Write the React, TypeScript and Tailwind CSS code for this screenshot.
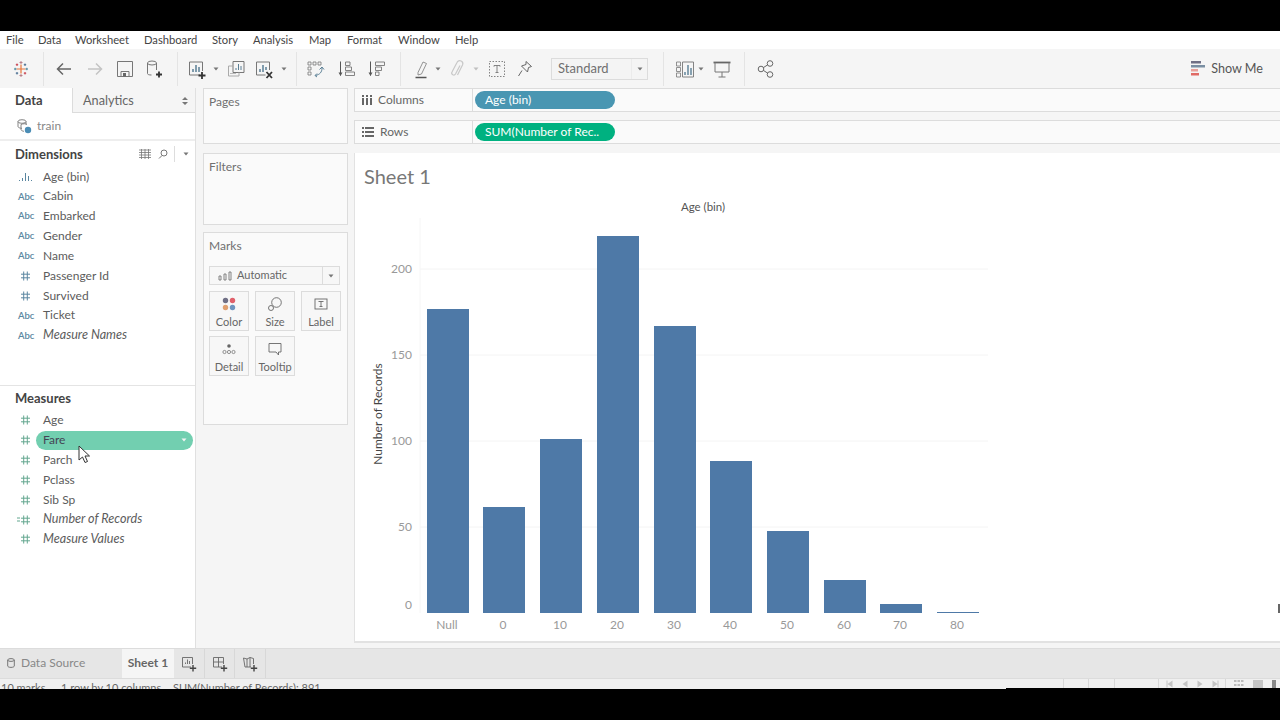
import React from "react";

const menus = [
  { label: "File", w: "w-[32px]" },
  { label: "Data", w: "w-[37px]" },
  { label: "Worksheet", w: "w-[69px]" },
  { label: "Dashboard", w: "w-[68px]" },
  { label: "Story", w: "w-[41px]" },
  { label: "Analysis", w: "w-[56px]" },
  { label: "Map", w: "w-[38px]" },
  { label: "Format", w: "w-[51px]" },
  { label: "Window", w: "w-[57px]" },
  { label: "Help", w: "w-[40px]" },
];

const dimensions = [
  { name: "Age (bin)", type: "bin" },
  { name: "Cabin", type: "abc" },
  { name: "Embarked", type: "abc" },
  { name: "Gender", type: "abc" },
  { name: "Name", type: "abc" },
  { name: "Passenger Id", type: "dimnum" },
  { name: "Survived", type: "dimnum" },
  { name: "Ticket", type: "abc" },
  { name: "Measure Names", type: "abc", italic: true },
];

const measures = [
  { name: "Age", type: "num" },
  { name: "Fare", type: "num", active: true },
  { name: "Parch", type: "num" },
  { name: "Pclass", type: "num" },
  { name: "Sib Sp", type: "num" },
  { name: "Number of Records", type: "calc", italic: true },
  { name: "Measure Values", type: "num", italic: true },
];

const bars = [
  { label: "Null", x: 427, top: 309 },
  { label: "0", x: 483, top: 507 },
  { label: "10", x: 540, top: 439 },
  { label: "20", x: 597, top: 236 },
  { label: "30", x: 654, top: 326 },
  { label: "40", x: 710, top: 461 },
  { label: "50", x: 767, top: 531 },
  { label: "60", x: 824, top: 580 },
  { label: "70", x: 880, top: 604 },
  { label: "80", x: 937, top: 612 },
];

const ticks = [
  { label: "200", y: 269 },
  { label: "150", y: 355 },
  { label: "100", y: 441 },
  { label: "50", y: 527 },
  { label: "0", y: 605 },
];

function Icon({ children, className = "" }: { children: React.ReactNode; className?: string }) {
  return (
    <svg viewBox="0 0 20 20" fill="none" stroke="#777" strokeWidth="1" className={`w-5 h-5 shrink-0 ${className}`}>
      {children}
    </svg>
  );
}

function Sep({ className = "" }: { className?: string }) {
  return <div className={`w-px h-[34px] bg-[#e4e4e4] shrink-0 ${className}`} />;
}

function Caret({ className = "", color = "#777" }: { className?: string; color?: string }) {
  return (
    <svg viewBox="0 0 6 4" className={`w-[6px] h-1 shrink-0 ${className}`}>
      <path d="M0.500 0.500h5L3 3.500z" fill={color} />
    </svg>
  );
}

function LogoIcon() {
  return (
    <svg viewBox="0 0 20 20" className="w-5 h-5 shrink-0 ml-[11px]" strokeWidth="1" fill="none">
      <path d="M10 5.500v9M5.500 10h9" stroke="#e8763a" strokeWidth="1.200" />
      <path d="M10 2v3M8.500 3.500h3M10 15v3M8.500 16.500h3" stroke="#b9808a" />
      <path d="M3 10h2.500M4.200 8.800v2.400M14.500 10H17M15.800 8.800v2.400" stroke="#4f8ba3" />
      <path d="M6 4.500v2.500M4.800 5.700h2.400M14 13v2.500M12.800 14.200h2.400" stroke="#c9404f" />
      <path d="M14 4.500v2.500M12.800 5.700h2.400M6 13v2.500M4.800 14.200h2.400" stroke="#4b6f92" />
    </svg>
  );
}

function FieldIcon({ type }: { type: string }) {
  if (type === "abc") {
    return <span className="w-[36px] pl-[18px] text-[9.500px] leading-none font-semibold text-[#5a86a0]">Abc</span>;
  }
  if (type === "bin") {
    return (
      <span className="w-[36px] pl-[18px] flex">
        <svg viewBox="0 0 15 10" className="w-[15px] h-[10px]">
          <path d="M1 8h1v1H1zM4 6h1v3H4zM7 1h1v8H7zM10 4h1v5h-1zM13 8h1v1h-1z" fill="#5a86a0" />
        </svg>
      </span>
    );
  }
  const color = type === "dimnum" ? "#5a86a0" : "#63a68f";
  return (
    <span className="w-[36px] pl-[15px] flex items-center">
      {type === "calc" ? (
        <svg viewBox="0 0 5 6" className="w-[5px] h-[6px]">
          <path d="M2 1h3M2 4h3" stroke={color} />
        </svg>
      ) : (
        <span className="w-[5px]" />
      )}
      <svg viewBox="0 0 10 10" className="w-[9px] h-[10px] ml-[1px]">
        <path d="M3 0v10M7 0v10M0 3h10M0 7h10" stroke={color} strokeWidth="1.100" />
      </svg>
    </span>
  );
}

function FieldRow({ f }: { f: { name: string; type: string; italic?: boolean; active?: boolean } }) {
  return (
    <div className="h-[19.850px] flex items-center">
      <FieldIcon type={f.type} />
      {f.active ? (
        <div className="w-[157px] h-[19px] rounded-full bg-[#72cfb0] flex items-center justify-between pl-[7px] pr-[5px] text-[#445]">
          <span>{f.name}</span>
          <Caret color="#f4f4f4" className="w-[8px]" />
        </div>
      ) : (
        <span className={f.italic ? "ml-[7px] italic text-[12.600px]" : "ml-[7px]"}>{f.name}</span>
      )}
    </div>
  );
}

function Card({ title, className = "", children }: { title: string; className?: string; children?: React.ReactNode }) {
  return (
    <div className={`bg-[#fafafa] border border-[#dcdcdc] px-[5px] shrink-0 ${className}`}>
      <div className="h-[26px] flex items-center text-[#707070]">{title}</div>
      {children}
    </div>
  );
}

function MarkButton({ label, children }: { label: string; children: React.ReactNode }) {
  return (
    <div className="w-10 h-10 border border-[#dcdcdc] bg-[#f7f7f7] flex flex-col items-center text-[11px] leading-[13px] text-[#666]">
      <div className="h-[22px] mt-px flex items-center justify-center">{children}</div>
      <span>{label}</span>
    </div>
  );
}

function ShelfRow({ icon, label, pill, pillColor }: { icon: React.ReactNode; label: string; pill: string; pillColor: string }) {
  return (
    <div className="h-[24px] bg-[#fafafa] border-y border-l border-[#dcdcdc] flex items-center shrink-0">
      <div className="w-[118px] h-full border-r border-[#dcdcdc] flex items-center pl-[7px] gap-[6px] text-[#666] shrink-0">
        {icon}
        <span>{label}</span>
      </div>
      <div className={`ml-[2px] w-[140px] h-[18px] rounded-full pl-[10px] flex items-center text-white ${pillColor}`}>{pill}</div>
    </div>
  );
}

function Chart() {
  return (
    <svg viewBox="355 195 925 445" className="w-[925px] h-[445px] shrink-0" fontFamily="Lato, sans-serif">
      <text x="703" y="211" fontSize="11.500" textAnchor="middle" fill="#555">Age (bin)</text>
      {ticks.slice(0, 4).map((t) => (
        <line key={t.label} x1="420" x2="988" y1={t.y} y2={t.y} stroke="#f4f4f4" />
      ))}
      <line x1="420" x2="420" y1="218" y2="613" stroke="#f6f6f6" />
      {ticks.map((t) => (
        <text key={t.label} x="412" y={t.y + 4} fontSize="12" textAnchor="end" fill="#999">{t.label}</text>
      ))}
      <text transform="translate(382 414) rotate(-90)" fontSize="12" textAnchor="middle" fill="#444">Number of Records</text>
      {bars.map((b) => (
        <g key={b.label}>
          <rect x={b.x} y={b.top} width="42" height={613 - b.top} fill="#4e79a7" />
          <text x={b.x + 20} y="629" fontSize="12" textAnchor="middle" fill="#999">{b.label}</text>
        </g>
      ))}
      <rect x="1278" y="604" width="2" height="9" fill="#666" />
    </svg>
  );
}

export default function App() {
  return (
    <div className="w-[1280px] h-[720px] overflow-hidden bg-black flex flex-col text-[12px] text-[#5c5c5c] relative font-['Lato',sans-serif]">
      <div className="h-[31px] shrink-0" />

      <div className="h-[18px] bg-white flex items-center pl-[6px] text-[11.200px] text-[#444] shrink-0">
        {menus.map((m) => (
          <span key={m.label} className={m.w}>{m.label}</span>
        ))}
      </div>

      <div className="h-[39px] bg-[#f5f5f5] flex items-center shrink-0">
        <LogoIcon />
        <Sep className="ml-[12px]" />
        <Icon className="ml-[10px]"><path d="M17 10H3.500M9 4.500L3.500 10 9 15.500" strokeWidth="1.500" stroke="#666" /></Icon>
        <Icon className="ml-[11px]"><path d="M3 10h13.500M11 4.500l5.500 5.500-5.500 5.500" stroke="#c4c4c4" strokeWidth="1.500" /></Icon>
        <Icon className="ml-[10px]"><path d="M2.500 2.500h15v15h-15zM6 17.500v-5h8v5" /><path d="M8 14h3v3.500H8z" fill="#666" stroke="none" /></Icon>
        <Icon className="ml-[9px]"><ellipse cx="8" cy="4" rx="4.500" ry="2" /><path d="M3.500 4v10.500c0 1 1.500 1.500 4 1.500M12.500 4v7" /><path d="M15 12.500v6M12 15.500h6" stroke="#333" strokeWidth="1.800" /></Icon>
        <Sep className="ml-[13px]" />
        <Icon className="ml-[9px]"><path d="M13 16H2.500V3h13v9" /><path d="M6 13v-3M9 13V6M12 13V8" strokeWidth="1.500" stroke="#5a7f95" /><path d="M15 13v7M11.500 16.500h7" stroke="#333" strokeWidth="1.800" /></Icon>
        <Caret className="ml-[6px]" />
        <Icon className="ml-[7px]"><path d="M7 2.500h11v11H7z" /><path d="M7 7H2.500v10H13v-3.500" stroke="#aaa" /><path d="M10 11V9M12.500 11V5M15 11V7" strokeWidth="1" stroke="#5a7f95" /><path d="M4 14.500h6" stroke="#bbb" /></Icon>
        <Icon className="ml-[8px]"><path d="M11.500 16H2.500V3h13v8" /><path d="M6 13v-3M9 13V6M12 11V8" strokeWidth="1.500" stroke="#5a7f95" /><path d="M12.500 13l5.500 6M18 13l-5.500 6" stroke="#333" strokeWidth="1.800" /></Icon>
        <Caret className="ml-[7px]" />
        <Sep className="ml-[9px]" />
        <Icon className="ml-[8px]"><path d="M3 3h3v3H3zM8 3h3v3H8zM13 3h3v3h-3zM3 8h3v3H3zM3 13h3v3H3z" strokeWidth="0.800" /><path d="M17 9c0 4-2 6.500-6.500 7.500M12 14.500l-2 2 2 1.500M14.500 10.500L17 8l2 2.500" stroke="#5a7f95" /></Icon>
        <Icon className="ml-[12px]"><path d="M3.500 2.500v14" stroke="#555" /><path d="M1.500 13.500l2 3.500 2-3.500z" fill="#555" stroke="none" /><path d="M8.500 3h4.500v3.500H8.500zM8.500 8h6v3.500h-6zM8.500 13h9v3.500h-9z" strokeWidth="0.900" /></Icon>
        <Icon className="ml-[10px]"><path d="M3.500 2.500v14" stroke="#555" /><path d="M1.500 13.500l2 3.500 2-3.500z" fill="#555" stroke="none" /><path d="M8.500 3h9v3.500h-9zM8.500 8h6v3.500h-6zM8.500 13h3.500v3.500H8.500z" strokeWidth="0.900" /></Icon>
        <Sep className="ml-[13px]" />
        <Icon className="ml-[11px]"><path d="M6 13.500L11 3l3.500 1.500-5 10.500-3.500 1z" strokeWidth="0.900" stroke="#888" /><path d="M3.500 18.500h11" stroke="#555" strokeWidth="1.500" /></Icon>
        <Caret className="ml-[3px]" />
        <Icon className="ml-[6px]"><path d="M13 6.500l-4.500 8.500a2 2 0 0 1-3.500-2l5-9.500a3 3 0 0 1 5.500 2.500l-5 10" stroke="#c8c8c8" strokeWidth="1.200" /></Icon>
        <Caret className="ml-[6px]" color="#c0c0c0" />
        <Icon className="ml-[8px]"><rect x="2.500" y="2.500" width="15" height="15" strokeDasharray="1.500 1.500" strokeWidth="0.900" /><path d="M7 6.500h6M10 6.500v7M8.500 13.500h3M7 6.500v1.200M13 6.500v1.200" strokeWidth="0.900" /></Icon>
        <Icon className="ml-[8px]"><path d="M11 2.500l5.500 5-3 1-1 4.500-6-6 4.500-1.500zM7 11.500L3.500 17" strokeWidth="1" stroke="#666" /></Icon>
        <div className="ml-[16px] w-[97px] h-[22px] bg-[#f4f4f4] border border-[#dcdcdc] flex items-center shrink-0 text-[13px] text-[#707070]">
          <span className="flex-1 pl-[6px]">Standard</span>
          <div className="w-[16px] h-full border-l border-[#ebebeb] flex items-center justify-center">
            <Caret />
          </div>
        </div>
        <Sep className="ml-[15px]" />
        <Icon className="ml-[11px]"><path d="M1.500 3h4v4h-4zM1.500 8.500h4v4h-4zM1.500 14h4v4h-4z" strokeWidth="0.800" /><path d="M7.500 3h11v15h-11z" strokeWidth="0.900" /><path d="M10 16v-3M13 16V6M16 16V9" stroke="#5a7f95" strokeWidth="1.400" /></Icon>
        <Caret className="ml-[3px]" />
        <Icon className="ml-[8px]"><path d="M1.500 3.500h17" strokeWidth="1.800" stroke="#666" /><path d="M3 3.500V13h14V3.500M10 13v5M6.500 18h7" strokeWidth="1" /></Icon>
        <Sep className="ml-[12px]" />
        <Icon className="ml-[11px]"><circle cx="5" cy="10" r="2.800" stroke="#666" /><circle cx="14" cy="4.500" r="2.800" stroke="#666" /><circle cx="14" cy="15.500" r="2.800" stroke="#666" /><path d="M7.400 8.600l4.200-2.700M7.400 11.400l4.200 2.700" stroke="#666" /></Icon>
        <div className="ml-auto flex items-center shrink-0 mr-[17px] mt-[1px]">
          <svg viewBox="0 0 14 16" className="w-[14px] h-4">
            <path d="M0 0h10v2.500H0z" fill="#6f6f85" />
            <path d="M0 4h14v2.500H0z" fill="#7a8fa3" />
            <path d="M0 8h7v2.500H0z" fill="#e8a09a" />
            <path d="M0 12h8v2.500H0z" fill="#e06a65" />
          </svg>
          <span className="ml-[6px] text-[12.600px] text-[#555]">Show Me</span>
        </div>
      </div>

      <div className="h-[560px] bg-[#f5f5f5] flex shrink-0">
        <div className="w-[196px] bg-white border-r border-[#e0e0e0] flex flex-col shrink-0">
          <div className="h-[25px] flex shrink-0">
            <div className="w-[72px] flex items-center pl-[15px] font-bold text-[13px] text-[#444]">Data</div>
            <div className="flex-1 bg-[#f5f5f5] border-l border-b border-[#dcdcdc] flex items-center pt-[1px] pl-[10px] pr-[7px] justify-between text-[12.700px] text-[#666]">
              <span>Analytics</span>
              <svg viewBox="0 0 6 8" className="w-[6px] h-2"><path d="M0 3L3 0l3 3zM0 5h6L3 8z" fill="#777" /></svg>
            </div>
          </div>
          <div className="h-[28px] border-b-2 border-[#eee] flex items-center pl-[16px] gap-[5px] shrink-0 text-[#888]">
            <svg viewBox="0 0 16 16" className="w-[16px] h-[16px]" fill="none" stroke="#777" strokeWidth="0.900">
              <ellipse cx="6" cy="3.500" rx="4" ry="1.800" />
              <path d="M2 3.500v5c0 1 2 1.800 4 1.800M10 3.500v3M5 6.500v5c0 1 2 1.800 3 1.800M5 6.500c2-1 5-1 6 0" />
              <circle cx="12" cy="12" r="3.200" fill="#4b8db5" stroke="none" />
            </svg>
            <span>train</span>
          </div>
          <div className="h-[245px] flex flex-col shrink-0 border-b border-[#e4e4e4]">
            <div className="h-[24px] mt-[2px] flex items-center pl-[15px] shrink-0">
              <span className="font-bold text-[13px] text-[#444] flex-1">Dimensions</span>
              <svg viewBox="0 0 12 10" className="w-3 h-[10px] -mt-[2px]" stroke="#777" strokeWidth="0.800" fill="none">
                <path d="M0 1h12M0 3.500h12M0 6h12M0 8.500h12M2.500 0v10M6 0v10M9.500 0v10" />
              </svg>
              <svg viewBox="0 0 10 10" className="w-[10px] h-[10px] ml-[7px] -mt-[2px]" stroke="#777" fill="none">
                <circle cx="6" cy="4" r="3" />
                <path d="M4 6.500L1 9.500" />
              </svg>
              <div className="w-px h-[16px] bg-[#ddd] ml-[6px] -mt-[2px]" />
              <Caret className="ml-[8px] mr-[6px] -mt-[2px]" />
            </div>
            <div className="-mt-[0.400px]">
              {dimensions.map((f) => (
                <FieldRow key={f.name} f={f} />
              ))}
            </div>
          </div>
          <div className="h-[24px] pt-[1px] flex items-center pl-[15px] font-bold text-[13px] text-[#444] shrink-0">Measures</div>
          <div className="pt-[0.500px]">
            {measures.map((f) => (
              <FieldRow key={f.name} f={f} />
            ))}
          </div>
        </div>

        <div className="w-[158px] pl-[7px] pr-[6px] flex flex-col shrink-0">
          <Card title="Pages" className="h-[56px]" />
          <Card title="Filters" className="h-[72px] mt-[9px]" />
          <Card title="Marks" className="h-[193px] mt-[7px]">
            <div className="h-[19px] w-[131px] mt-[7px] bg-[#f7f7f7] border border-[#dcdcdc] flex items-center text-[11px] text-[#666]">
              <svg viewBox="0 0 14 10" className="w-[14px] h-[10px] ml-[8px]" fill="none" stroke="#777" strokeWidth="0.900">
                <path d="M1 5h2v4H1zM6 3h2v6H6zM11 1h2v8h-2z" />
              </svg>
              <span className="ml-[5px] flex-1">Automatic</span>
              <div className="w-[17px] h-full border-l border-[#dcdcdc] flex items-center justify-center">
                <Caret />
              </div>
            </div>
            <div className="grid grid-cols-[40px_40px_40px] gap-x-[6px] gap-y-[5px] mt-[6px]">
              <MarkButton label="Color">
                <svg viewBox="0 0 14 14" className="w-[14px] h-[14px]">
                  <circle cx="3.500" cy="3.500" r="2.700" fill="#6f6f85" />
                  <circle cx="10.500" cy="3.500" r="2.700" fill="#e0606a" />
                  <circle cx="3.500" cy="10.500" r="2.700" fill="#e0a070" />
                  <circle cx="10.500" cy="10.500" r="2.700" fill="#6f95c0" />
                </svg>
              </MarkButton>
              <MarkButton label="Size">
                <svg viewBox="0 0 14 14" className="w-[14px] h-[14px]" fill="none" stroke="#666" strokeWidth="0.900">
                  <circle cx="8.500" cy="5.500" r="4.800" />
                  <circle cx="3" cy="11" r="2.500" fill="#f7f7f7" />
                </svg>
              </MarkButton>
              <MarkButton label="Label">
                <svg viewBox="0 0 14 14" className="w-[14px] h-[14px]" fill="none" stroke="#666">
                  <rect x="1" y="2" width="12" height="10" strokeWidth="0.900" />
                  <path d="M4.500 4.500h5M7 4.500v5M5.500 9.500h3" strokeWidth="0.900" />
                </svg>
              </MarkButton>
              <MarkButton label="Detail">
                <svg viewBox="0 0 14 12" className="w-[14px] h-[12px]" fill="none" stroke="#777" strokeWidth="0.800">
                  <circle cx="7" cy="3" r="1.800" fill="#666" stroke="none" />
                  <circle cx="2.500" cy="9" r="1.600" />
                  <circle cx="7" cy="9" r="1.600" />
                  <circle cx="11.500" cy="9" r="1.600" />
                </svg>
              </MarkButton>
              <MarkButton label="Tooltip">
                <svg viewBox="0 0 14 14" className="w-[14px] h-[14px]" fill="none" stroke="#666" strokeWidth="0.900">
                  <path d="M1 1.500h12v8.500h-2.500v3L8 10H1z" />
                </svg>
              </MarkButton>
            </div>
          </Card>
        </div>

        <div className="flex-1 flex flex-col min-w-0">
          <ShelfRow
            label="Columns"
            pill="Age (bin)"
            pillColor="bg-[#4996b2]"
            icon={
              <svg viewBox="0 0 10 10" className="w-[10px] h-[10px]">
                <path d="M0 0h2v2H0zM4 0h2v2H4zM8 0h2v2H8zM0 3h2v7H0zM4 3h2v7H4zM8 3h2v7H8z" fill="#666" />
              </svg>
            }
          />
          <div className="h-[8px] shrink-0" />
          <ShelfRow
            label="Rows"
            pill="SUM(Number of Rec.."
            pillColor="bg-[#00b180]"
            icon={
              <svg viewBox="0 0 12 10" className="w-[12px] h-[10px]">
                <path d="M0 0h2v2H0zM3 0h9v2H3zM0 4h2v2H0zM3 4h9v2H3zM0 8h2v2H0zM3 8h9v2H3z" fill="#666" />
              </svg>
            }
          />
          <div className="h-[9px] shrink-0" />
          <div className="h-[490px] bg-white border-l border-b-2 border-[#e2e2e2] flex flex-col shrink-0">
            <div className="h-[42px] pt-[4px] pl-[9px] flex items-center text-[20px] text-[#777] shrink-0">Sheet 1</div>
            <Chart />
          </div>
        </div>
      </div>

      <div className="h-[30px] bg-[#e6e6e6] border-t border-[#dcdcdc] flex shrink-0 text-[#888]">
        <div className="w-[122px] flex items-center pl-[7px] pb-[1px] gap-[6px]">
          <svg viewBox="0 0 8 10" className="w-2 h-[10px]" fill="none" stroke="#777">
            <ellipse cx="4" cy="2" rx="3.300" ry="1.400" />
            <path d="M0.700 2v6c0 .8 1.500 1.400 3.300 1.400s3.300-.6 3.300-1.400V2" />
          </svg>
          <span>Data Source</span>
        </div>
        <div className="w-[52px] bg-[#f5f5f5] flex items-center justify-center pb-[1px] font-bold text-[#666]">Sheet 1</div>
        {[0, 1, 2].map((i) => (
          <div key={i} className="w-[30.500px] border-r border-[#d8d8d8] flex items-center justify-center pl-[1px]">
            <svg viewBox="0 0 16 16" className="w-4 h-4" fill="none" stroke="#666" strokeWidth="0.900">
              {i === 0 && <path d="M10 11H1.500V1.500h10V8M4.500 8V6.500M6.500 8V3.500M8.500 8V5" />}
              {i === 1 && <path d="M10 11H1.500V1.500h10V8M1.500 6h10M6.500 1.500V11" />}
              {i === 2 && <path d="M9 11H3L1.500 2 5 3l3-1.500 3.500 1V8M5 3v8M8 1.500V11" />}
              <path d="M12 9v6.500M8.800 12.200h6.400" stroke="#444" strokeWidth="1.400" />
            </svg>
          </div>
        ))}
      </div>

      <div className="h-[11px] bg-[#f0f0f0] overflow-hidden flex shrink-0 text-[11px] text-[#666] border-t border-[#dcdcdc]">
        <div className="w-[61px] pl-px pt-[2px] leading-[13px] shrink-0">10 marks</div>
        <div className="w-[112px] pt-[2px] leading-[13px] shrink-0">1 row by 10 columns</div>
        <div className="pt-[2px] leading-[13px] shrink-0">SUM(Number of Records): 891</div>
        <div className="ml-auto flex shrink-0 text-[#bbb]">
          <div className="w-[25px] border-l border-[#d8d8d8]" />
          <div className="w-[26px] border-l border-[#d8d8d8]" />
          <div className="w-[44px] border-l border-[#d8d8d8]" />
          <div className="w-[67px] border-l border-[#d8d8d8] flex items-center pl-[7px] gap-[7px]">
            {["M1 4L6 0.500v7zM0 0.500h1v7H0z", "M1 4L6 0.500v7z", "M6 4L1 0.500v7z", "M6 4L1 0.500v7zM6 0.500h1v7H6z"].map((d) => (
              <svg key={d} viewBox="0 0 7 8" className="w-2 h-2"><path d={d} fill="#c4c4c4" /></svg>
            ))}
          </div>
          <div className="w-[55px] border-l border-[#d8d8d8] flex items-center pl-[8px] gap-[9px]">
            <svg viewBox="0 0 10 8" className="w-[10px] h-2"><path d="M0 0h2.500v2H0zM3.500 0H6v2H3.500zM7 0h2.500v2H7zM0 4h2.500v2H0zM3.500 4H6v2H3.500zM7 4h2.500v2H7z" fill="#bbb" /></svg>
            <div className="w-[10px] h-2 bg-[#c4c4c4]" />
            <div className="w-[4px] h-2 bg-[#888]" />
          </div>
        </div>
      </div>

      <div className="absolute left-[1006px] top-[688px] w-[274px] h-px bg-black" />

      <svg viewBox="0 0 13 18" className="absolute left-[78px] top-[445px] w-[13px] h-[18px]">
        <path d="M1 1v14l3.500-3 2.500 5.500 2.500-1-2.500-5.500h4.500z" fill="#fff" stroke="#333" strokeWidth="1" />
      </svg>
    </div>
  );
}
